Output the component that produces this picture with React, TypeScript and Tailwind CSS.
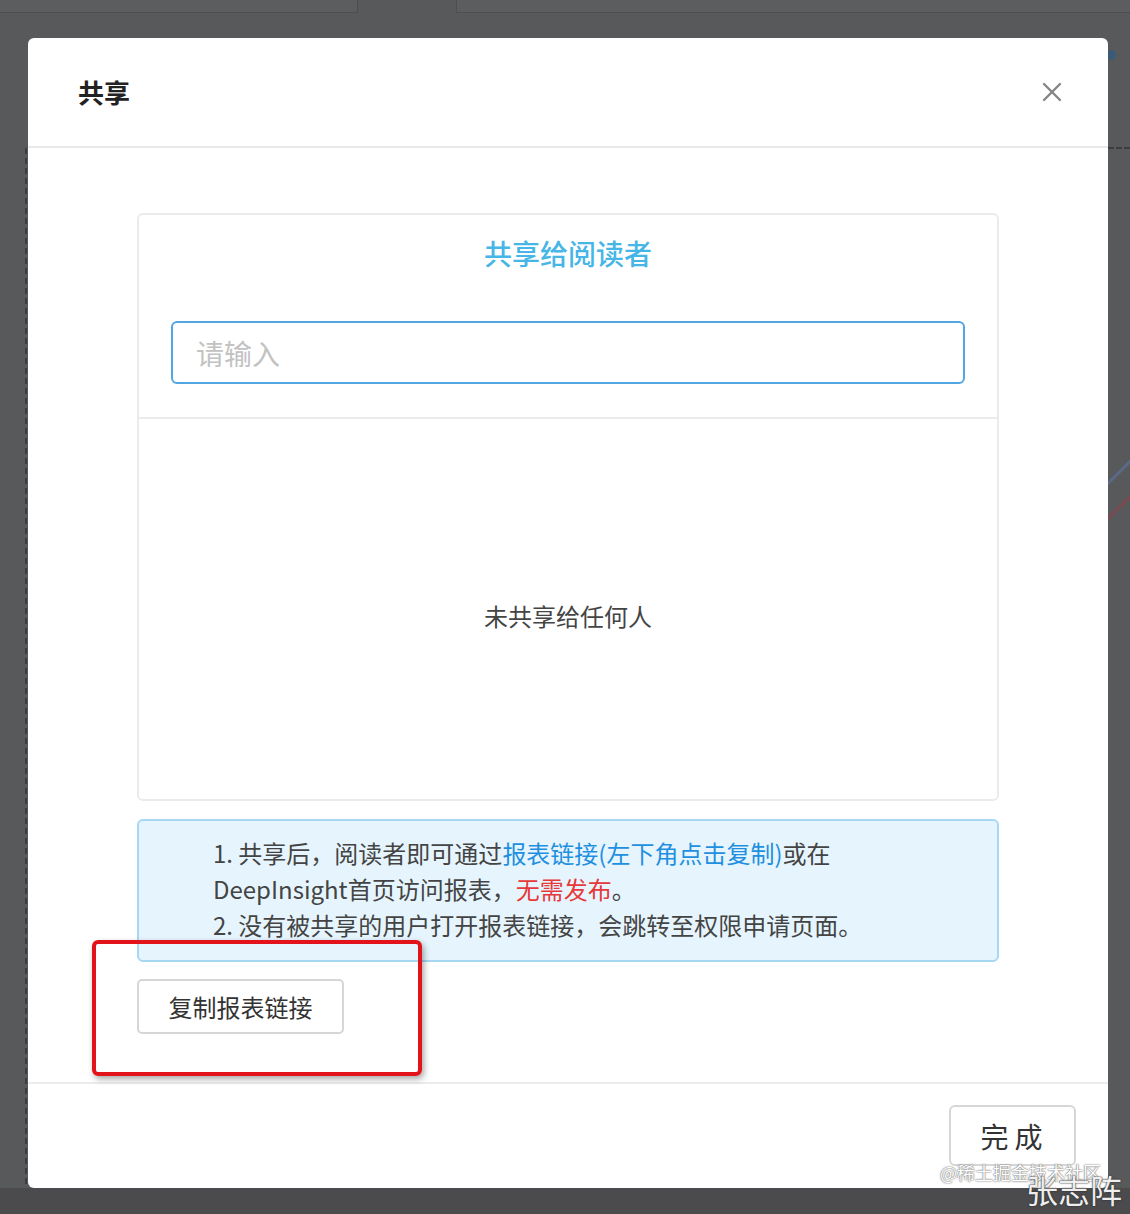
import { X } from 'lucide-react'

const cjk = { fontFamily: '"Noto Sans CJK SC", "Noto Sans", sans-serif' }

export default function App() {
  return (
    <div className="relative w-[1130px] h-[1214px] overflow-hidden bg-[#58595b]" style={cjk}>
      {/* page behind the mask */}
      <div className="absolute left-0 top-0 w-[358px] h-[13px] border-b border-r border-[#4d4e50] bg-[#5c5d5f]" />
      <div className="absolute left-[456px] top-0 w-[674px] h-[13px] border-b border-l border-[#4d4e50] bg-[#5c5d5f]" />
      <div className="absolute left-[25px] top-[148px] h-[1066px] border-l-2 border-dashed border-[#3c3d3f]" />
      <div className="absolute left-[1108px] top-[147px] w-[22px] border-t-2 border-dashed border-[#3c3d3f]" />
      <div className="absolute left-[1106px] top-[50px] w-[10px] h-[10px] rounded-full bg-[#3b5a78]" />
      <div className="absolute left-[1100px] top-[470px] w-[40px] h-[3px] bg-[#5a6a86] -rotate-45" />
      <div className="absolute left-[1100px] top-[505px] w-[40px] h-[3px] bg-[#7a4a52] -rotate-45" />
      <div className="absolute left-0 top-[1188px] w-[1130px] h-[26px] bg-[#4b4b4d]" />

      {/* modal */}
      <div className="relative ml-[28px] mt-[38px] w-[1080px] h-[1150px] rounded-[6px] bg-white flex flex-col">
        <div className="h-[110px] shrink-0 flex items-center justify-between pl-[50px] pr-[40px] border-b-2 border-[#e9e9e9]">
          <span className="text-[26px] font-semibold text-[#222] leading-none">共享</span>
          <X size={32} strokeWidth={1.8} color="#858585" />
        </div>

        <div className="flex-1 flex flex-col px-[109px] pt-[65px]">
          <div className="h-[588px] rounded-[6px] border-2 border-[#ebebeb] flex flex-col">
            <div className="flex flex-col items-center pt-[18px] px-[32px] pb-[33px] border-b-2 border-[#ebebeb]">
              <div className="text-[28px] font-medium text-[#46b6e6] leading-[40px]">共享给阅读者</div>
              <div className="mt-[48px] w-full h-[63px] rounded-[6px] border-2 border-[#52a6e2] flex items-center pl-[23px]">
                <span className="text-[28px] text-[#c2c2c2]">请输入</span>
              </div>
            </div>
            <div className="flex-1 flex items-center justify-center pt-[14px]">
              <span className="text-[24px] text-[#444]">未共享给任何人</span>
            </div>
          </div>

          <div className="mt-[18px] h-[143px] rounded-[6px] border-2 border-[#a6d8f3] bg-[#e6f5fd] pl-[74px] pt-[14px] text-[24px] leading-[36px] text-[#444]">
            <div>
              1. 共享后，阅读者即可通过<span className="text-[#1f8fe0]">报表链接(左下角点击复制)</span>或在
            </div>
            <div>
              DeepInsight首页访问报表，<span className="text-[#e7383a]">无需发布</span>。
            </div>
            <div>2. 没有被共享的用户打开报表链接，会跳转至权限申请页面。</div>
          </div>

          <div className="mt-[17px] w-[207px] h-[55px] rounded-[5px] border-2 border-[#d6d6d6] flex items-center justify-center">
            <span className="text-[24px] text-[#333]">复制报表链接</span>
          </div>
        </div>

        <div className="h-[106px] shrink-0 border-t-2 border-[#ececec] flex justify-end pt-[21px] pr-[32px]">
          <div className="w-[127px] h-[61px] rounded-[6px] border-2 border-[#d6d6d6] flex items-center justify-center">
            <span className="text-[28px] text-[#333] tracking-[6px] pl-[4px]">完成</span>
          </div>
        </div>

        {/* annotation */}
        <div className="absolute left-[64px] top-[902px] w-[330px] h-[136px] rounded-[6px] border-[4px] border-[#e3131c] shadow-[2px_3px_6px_rgba(0,0,0,0.35)]" />
      </div>

      {/* watermarks */}
      <div className="absolute left-[940px] top-[1160px] text-[18px] leading-[24px] text-white [text-shadow:0_0_2px_#777,0_0_1px_#555]">
        @稀土掘金技术社区
      </div>
      <div className="absolute left-[1026px] top-[1168px] text-[32px] leading-[42px] text-[#eee] [text-shadow:0_0_2px_#333,0_0_1px_#222]">
        张志阵
      </div>
    </div>
  )
}
